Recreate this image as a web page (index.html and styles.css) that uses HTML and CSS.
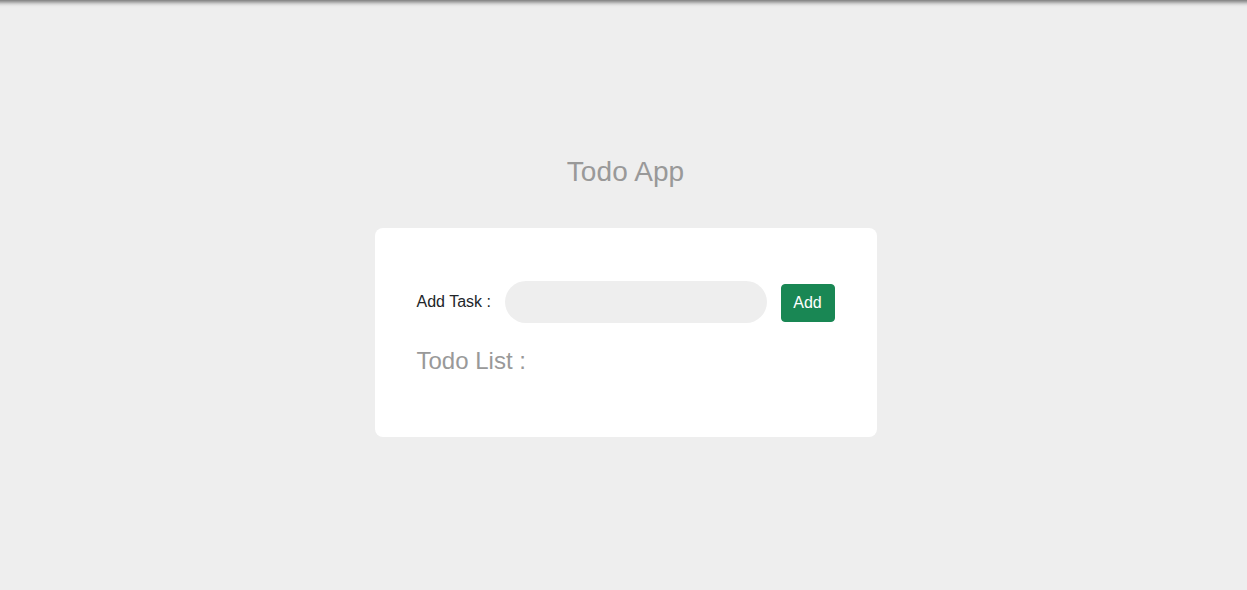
FILE: index.html
```html
<!DOCTYPE html>
<html lang="en">
<head>
<meta charset="utf-8">
<title>Todo App</title>
<link rel="stylesheet" href="styles.css">
</head>
<body>
<div class="topshadow"></div>
<main class="app">
  <h1 class="title">Todo App</h1>
  <section class="card">
    <div class="add-row">
      <label class="add-label" for="task">Add Task :</label>
      <input class="task-input" id="task" type="text">
      <button class="btn-add" type="button">Add</button>
    </div>
    <h2 class="list-title">Todo List :</h2>
  </section>
</main>
</body>
</html>
```
FILE: styles.css
```css
* { box-sizing: border-box; }
html, body {
  margin: 0;
  padding: 0;
  background: #eeeeee;
  font-family: "Liberation Sans", Arial, sans-serif;
}
body {
  min-height: 100vh;
  position: relative;
}
.topshadow {
  position: absolute;
  top: 0;
  left: 0;
  right: 0;
  height: 8px;
  background: linear-gradient(to bottom, #808080 0px, #a8a8a8 2px, #d4d4d4 4px, #eaeaea 6px, #eeeeee 8px);
}
.app {
  display: flex;
  flex-direction: column;
  align-items: center;
  padding-top: 156px;
  padding-left: 4px;
}
.title {
  margin: 0 0 40px;
  font-size: 28px;
  font-weight: normal;
  line-height: 32px;
  color: #999999;
  letter-spacing: 0.1px;
}
.card {
  width: 502px;
  background: #ffffff;
  border-radius: 8px;
  padding: 53px 42px 62px;
}
.add-row {
  display: flex;
  align-items: center;
  gap: 14px;
}
.add-label {
  font-size: 16px;
  color: #212529;
  white-space: nowrap;
}
.task-input {
  flex: 1;
  min-width: 0;
  height: 42px;
  border: none;
  border-radius: 21px;
  background: #eeeeee;
  outline: none;
  padding: 0 16px;
  font-size: 16px;
  font-family: inherit;
}
.btn-add {
  height: 38px;
  width: 54px;
  padding: 6px 0;
  border: 1px solid #198754;
  border-radius: 4px;
  background: #198754;
  color: #ffffff;
  font-size: 16px;
  font-family: inherit;
  line-height: 24px;
  margin-top: 2px;
}
.list-title {
  margin: 24px 0 0;
  font-size: 24px;
  font-weight: normal;
  line-height: 28px;
  color: #999999;
}
```
